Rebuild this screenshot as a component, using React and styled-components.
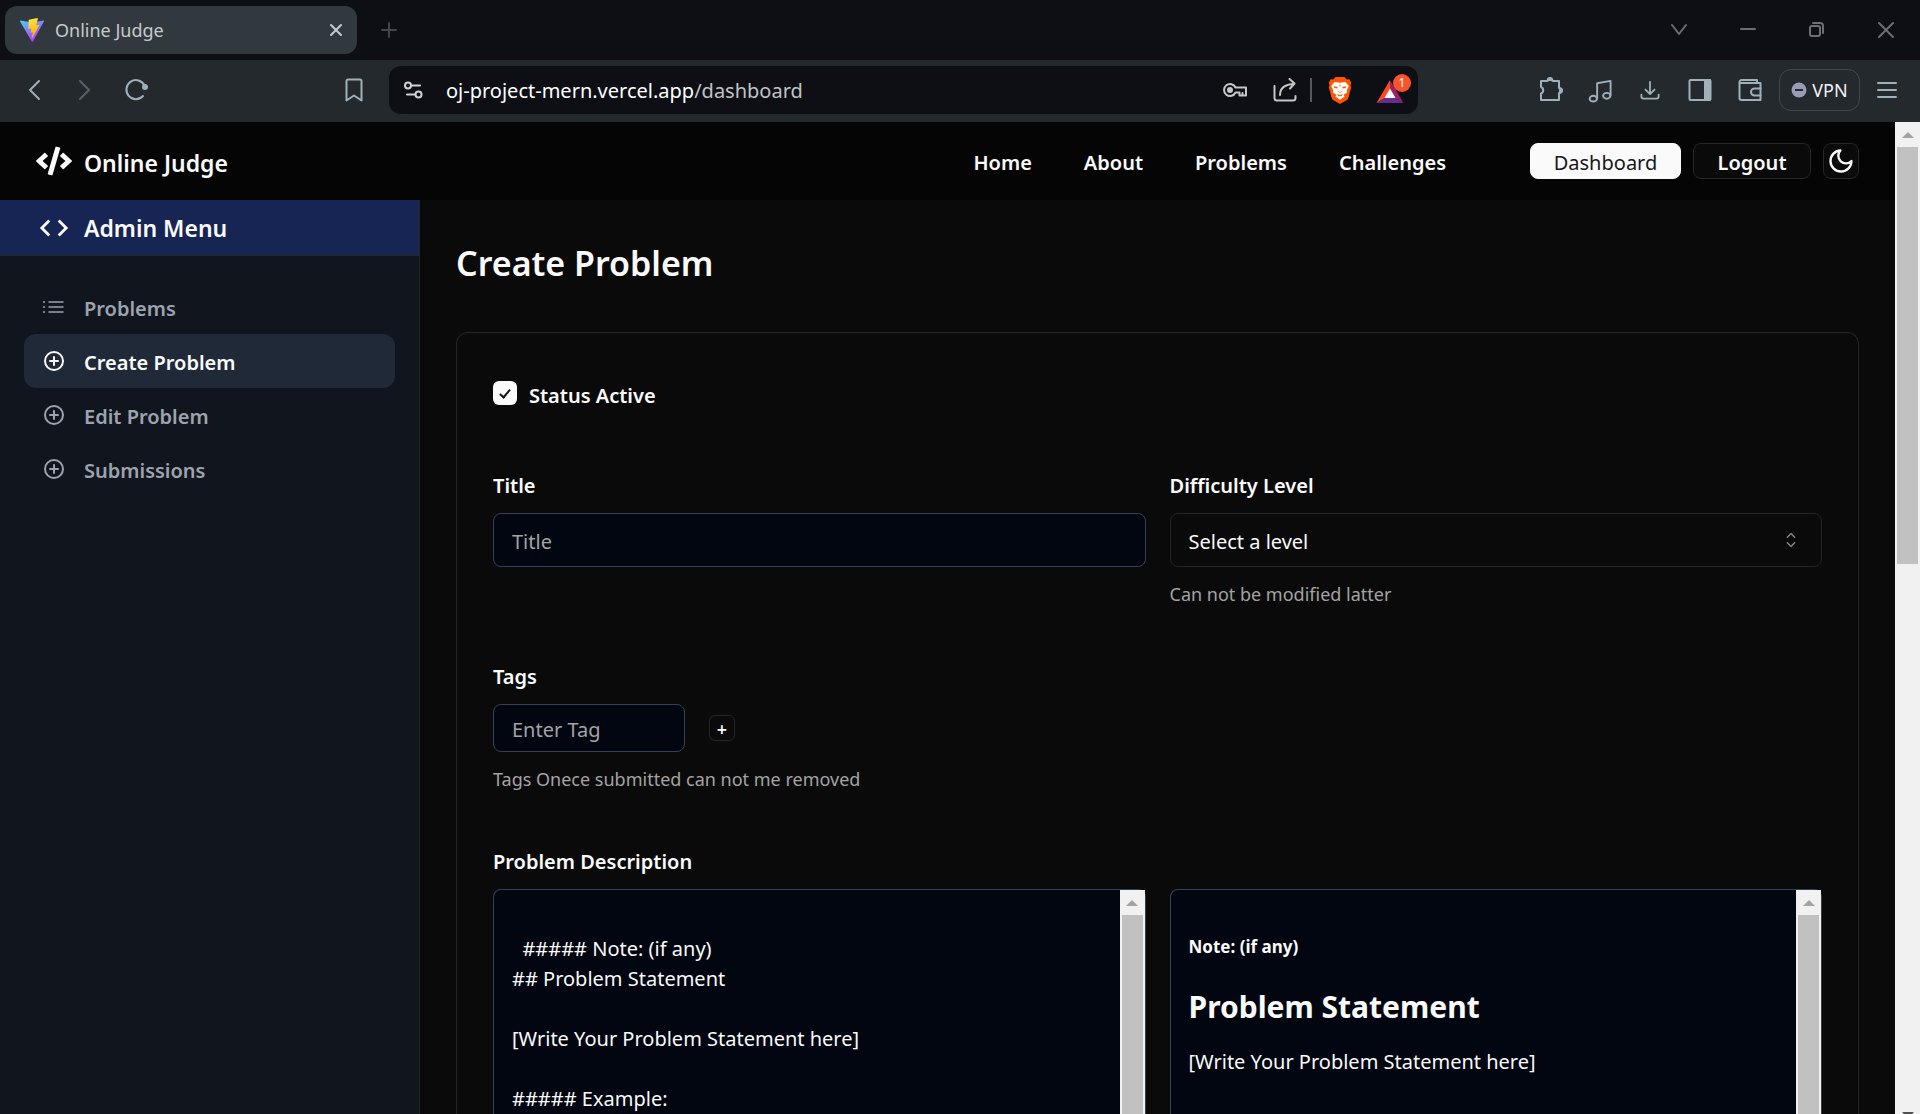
import React from "react";
import styled, { createGlobalStyle } from "styled-components";
import { FaCode } from "react-icons/fa";
import { MdCode } from "react-icons/md";
import { RxCaretSort } from "react-icons/rx";

const GlobalStyle = createGlobalStyle`
  *, *::before, *::after { box-sizing: border-box; }
  html, body, #root { height: 100%; }
  body {
    margin: 0;
    overflow: hidden;
    background: #0a0a0a;
    color: #fafafa;
    font-family: "Noto Sans", "Open Sans", sans-serif;
    font-size: 20px;
  }
  button, input, select, textarea { font: inherit; color: inherit; }
  button { padding: 0; border: 0; background: none; cursor: pointer; }
  h1, h2, h5, p, ul { margin: 0; padding: 0; }
  a { color: inherit; text-decoration: none; }
`;

/* ---------- browser window ---------- */

const Window = styled.div`
  display: flex;
  flex-direction: column;
  height: 100vh;
`;

const TabStrip = styled.div`
  display: flex;
  align-items: center;
  flex: none;
  height: 60px;
  padding-left: 5px;
  background: #0d0f14;
  color: #6b6e72;
`;

const Tab = styled.div`
  display: flex;
  align-items: center;
  gap: 11px;
  width: 352px;
  height: 48px;
  padding: 0 13px 0 15px;
  border-radius: 12px;
  background: #32393e;
  color: #c6cacc;
  font-size: 18px;
`;

const TabTitle = styled.span`
  flex: 1;
`;

const IconButton = styled.button`
  display: grid;
  place-items: center;
  flex: none;
  width: ${(p) => p.$w || 24}px;
  height: ${(p) => p.$h || 24}px;
  color: ${(p) => p.$color || "inherit"};
`;

const NewTab = styled(IconButton)`
  margin-left: 14px;
  color: #43474c;
`;

const WindowControls = styled.div`
  display: flex;
  margin-left: auto;
`;

const Toolbar = styled.div`
  display: flex;
  align-items: center;
  flex: none;
  height: 62px;
  padding: 0 6px 2px 11px;
  background: #23292d;
  color: #9fb0ba;
`;

const ToolGroup = styled.div`
  display: flex;
  align-items: center;
  margin-left: ${(p) => (p.$push ? "auto" : "0")};
`;

const BookmarkSlot = styled.div`
  display: flex;
  justify-content: flex-end;
  width: 228px;
  padding-right: 12px;
`;

const AddressBar = styled.div`
  display: flex;
  align-items: center;
  flex: 0 1 1029px;
  height: 48px;
  padding-left: 13px;
  border-radius: 12px;
  background: #0d0f14;
  color: #d0d2d4;
`;

const Url = styled.div`
  flex: 1;
  padding-left: 22px;
  outline: none;
  color: #fff;
  span { color: #c0c3c6; }
`;

const Divider = styled.span`
  width: 2px;
  height: 24px;
  background: #55595e;
`;

const VpnButton = styled.button`
  display: flex;
  align-items: center;
  justify-content: center;
  gap: 5px;
  width: 81px;
  height: 42px;
  margin-left: 4px;
  border: 1px solid #3c4a50;
  border-radius: 12px;
  color: #f0f2f4;
  font-size: 18px;
`;

/* ---------- scroll bars ---------- */

const ScrollTrack = styled.div`
  display: flex;
  flex-direction: column;
  flex: none;
  width: 25px;
  background: #f1f1f1;
`;

const ScrollArrow = styled.span`
  display: grid;
  place-items: center;
  flex: none;
  height: 25px;
  margin-bottom: ${(p) => (p.$down ? "-13px" : "0")};
  margin-top: ${(p) => (p.$down ? "auto" : "0")};
  &::before {
    content: "";
    border: 6px solid transparent;
    border-top: ${(p) => (p.$down ? "6px solid #505050" : "0")};
    border-bottom: ${(p) => (p.$down ? "0" : "6px solid #a3a3a3")};
  }
`;

const ScrollThumb = styled.span`
  flex: ${(p) => p.$grow};
  margin: 0 2px;
  background: #c1c1c1;
`;

/* ---------- site ---------- */

const Viewport = styled.div`
  display: flex;
  flex: 1;
  min-height: 0;
`;

const Site = styled.div`
  display: flex;
  flex-direction: column;
  flex: 1;
  min-width: 0;
`;

const Caption = styled.span`
  padding-top: 3px;
`;

const Header = styled.header`
  display: flex;
  align-items: center;
  flex: none;
  height: 78px;
  padding: 0 36px;
  background: #050505;
  font-weight: 600;
`;

const Brand = styled.a`
  display: flex;
  align-items: center;
  gap: 12px;
  font-size: 23px;
`;

const Nav = styled.nav`
  display: flex;
  gap: 52px;
  margin-left: auto;
  padding-top: 3px;
`;

const HeaderActions = styled.div`
  display: flex;
  align-items: center;
  gap: 12px;
  margin-left: 84px;
`;

const HeaderButton = styled.button`
  display: grid;
  place-items: center;
  width: ${(p) => p.$w}px;
  height: 36px;
  border: 1px solid ${(p) => (p.$filled ? "#fafafa" : "#262626")};
  border-radius: 8px;
  background: ${(p) => (p.$filled ? "#fafafa" : "#0a0a0a")};
  color: ${(p) => (p.$filled ? "#171717" : "#fafafa")};
  font-weight: ${(p) => (p.$filled ? 400 : 600)};
`;

const Body = styled.div`
  display: flex;
  flex: 1;
  min-height: 0;
`;

const Sidebar = styled.aside`
  flex: none;
  width: 420px;
  border-right: 1px solid #262626;
  background: #11151d;
`;

const SidebarTitle = styled.div`
  display: flex;
  align-items: center;
  gap: 13px;
  height: 56px;
  padding-left: 37px;
  border-bottom: 1px solid #262626;
  background: #172554;
  font-size: 23px;
  font-weight: 600;
`;

const Menu = styled.ul`
  padding: 24px;
  list-style: none;
`;

const MenuLink = styled.a`
  display: flex;
  align-items: center;
  gap: 18px;
  height: 54px;
  padding-left: 18px;
  border-radius: 12px;
  background: ${(p) => (p.$active ? "#1f2937" : "transparent")};
  color: ${(p) => (p.$active ? "#fafafa" : "#9ca3af")};
  font-weight: 600;
`;

const Main = styled.main`
  display: flex;
  flex-direction: column;
  flex: 1;
  min-width: 0;
  padding: 36px 36px 0;
`;

const PageTitle = styled.h1`
  margin-bottom: 42px;
  font-size: 34px;
  font-weight: 600;
  line-height: 54px;
`;

const Card = styled.form`
  display: flex;
  flex-direction: column;
  flex: 1;
  gap: 53px;
  min-height: 0;
  padding: 36px;
  border: 1px solid #262626;
  border-bottom: 0;
  border-radius: 12px 12px 0 0;
`;

const StatusRow = styled.div`
  display: flex;
  align-items: flex-start;
  gap: 12px;
  height: 49px;
  padding-top: 12px;
`;

const Checkbox = styled.input`
  appearance: none;
  width: 24px;
  height: 24px;
  margin: 0;
  border-radius: 6px;
  background: #fafafa;
  display: grid;
  place-items: center;
  &:checked::before {
    content: "";
    width: 6px;
    height: 11px;
    margin-bottom: 2px;
    border: solid #171717;
    border-width: 0 2px 2px 0;
    transform: rotate(40deg);
  }
`;

const Label = styled.label`
  font-weight: 600;
  line-height: 30px;
`;

const Columns = styled.div`
  display: grid;
  grid-template-columns: 1fr 1fr;
  gap: 24px;
`;

const Field = styled.div`
  display: flex;
  flex-direction: column;
  gap: 12px;
`;

const TextInput = styled.input`
  width: ${(p) => (p.$w ? p.$w + "px" : "100%")};
  height: ${(p) => p.$h}px;
  padding: 2px 18px 0;
  border: 1px solid #334155;
  border-radius: 8px;
  background: #020611;
  outline: none;
  &::placeholder { color: #a3a3a3; opacity: 1; }
`;

const SelectBox = styled.div`
  display: grid;
  align-items: center;
  > * { grid-area: 1 / 1; }
  svg {
    justify-self: end;
    margin-right: 19px;
    color: #8a8a8a;
    pointer-events: none;
  }
`;

const Select = styled.select`
  appearance: none;
  width: 100%;
  height: 54px;
  padding: 2px 18px 0;
  border: 1px solid #262626;
  border-radius: 8px;
  background: #0a0a0a;
  outline: none;
`;

const Hint = styled.p`
  color: #a3a3a3;
  font-size: 18px;
  line-height: 30px;
`;

const TagRow = styled.div`
  display: flex;
  align-items: center;
  gap: 24px;
`;

const AddTag = styled.button`
  display: grid;
  place-items: center;
  width: 26px;
  height: 26px;
  border: 1px solid #262626;
  border-radius: 6px;
  font-size: 18px;
  font-weight: 600;
  line-height: 21px;
`;

const DescriptionField = styled(Field)`
  flex: 1;
  min-height: 0;
`;

const Editors = styled(Columns)`
  flex: 1;
  min-height: 0;
  margin-bottom: -36px;
`;

const Pane = styled.div`
  display: flex;
  min-height: 0;
  border: 1px solid #334155;
  border-bottom: 0;
  border-radius: 8px 8px 0 0;
  background: #020611;
`;

const Editor = styled.textarea`
  flex: 1;
  min-width: 0;
  padding: 14px 18px;
  border: 0;
  border-radius: 8px 0 0 0;
  background: transparent;
  outline: none;
  resize: none;
  overflow: hidden;
  line-height: 30px;
`;

const Preview = styled.div`
  flex: 1;
  min-width: 0;
  padding: 45px 18px 0;
  overflow: hidden;
  h5 { font-size: 17px; font-weight: 700; line-height: 24px; }
  h2 { margin: 28px 0 20px; font-size: 30px; font-weight: 700; line-height: 40px; }
  p { line-height: 30px; }
`;

/* ---------- drawings ---------- */

const Svg = ({ size = 24, w = size, h = size, box, sw = 2, children }) => (
  <svg
    width={w}
    height={h}
    viewBox={box || `0 0 ${w} ${h}`}
    fill="none"
    stroke="currentColor"
    strokeWidth={sw}
    strokeLinecap="round"
    strokeLinejoin="round"
    aria-hidden="true"
  >
    {children}
  </svg>
);

const ViteLogo = () => (
  <svg width="24" height="24" viewBox="0 0 24 24" aria-hidden="true">
    <defs>
      <linearGradient id="shield" x1="0" y1="0" x2="0.6" y2="1">
        <stop offset="0" stopColor="#41d1ff" />
        <stop offset="1" stopColor="#bd34fe" />
      </linearGradient>
      <linearGradient id="bolt" x1="0.4" y1="0" x2="0.6" y2="1">
        <stop offset="0" stopColor="#ffea83" />
        <stop offset="0.1" stopColor="#ffdd35" />
        <stop offset="1" stopColor="#ffa800" />
      </linearGradient>
    </defs>
    <path d="M23.9 3.4 12.9 23.4c-.3.4-.9.4-1.1 0L.1 3.4c-.3-.5.1-1 .6-.9L12.1 4.500l11.200-2c.5-.1.9.4.6.9z" fill="url(#shield)" />
    <path d="M17.300.1 9 1.700c-.2 0-.3.1-.3.3l-.5 8.700c0 .2.2.4.4.3l2.300-.5c.2 0 .4.200.4.4l-.7 3.400c0 .2.200.4.4.4l1.400-.5c.2 0 .4.200.4.400l-1.100 5.300c-.1.4.4.500.6.2L19.500 7.100c.1-.2-.1-.5-.3-.4l-2.500.5c-.2 0-.4-.2-.4-.4l1.500-5.500c.1-.8-.2-1.200-.5-1.200z" fill="url(#bolt)" />
  </svg>
);

const BraveLion = () => (
  <svg width="24" height="28" viewBox="0 0 24 28" aria-hidden="true">
    <path d="M7.500 1h9l2.300 2.600 2.500-.3 2 3.500-.8 2.200.7 2.200-2.700 10.300c-.4 1.200-1 2-2 2.700L12.900 27.500c-.6.4-1.200.4-1.800 0L5.500 24.200c-1-.7-1.600-1.500-2-2.700L.8 11.200 1.500 9 .7 6.800l2-3.500 2.500.3z" fill="#ff5500" />
    <path d="M6.500 6 12 6.800 17.500 6l3.200 4-1.900 4.200.4 2.300-3.600 2.300 1 1.600L12 23.800l-4.600-3.400 1-1.600-3.600-2.300.4-2.300L3.300 10z" fill="#fff" />
    <path d="M5.500 10.200 9.800 11l-.4 1.400-3-.5zM18.500 10.200 14.200 11l.4 1.400 3-.5zM10.300 12.500l-.6 3 2.300 1.200 2.300-1.200-.6-3 .3 2.700L12 16l-2-.8zM9 17.800l3 1.500 3-1.500-1.700 2.600L12 19.900l-1.300.5zM11.300 8.800h1.400L12 11.500z" fill="#ff5500" />
  </svg>
);

const BatLogo = () => (
  <svg width="36" height="32" viewBox="0 0 36 32" aria-hidden="true">
    <path d="M15 6 1.500 29 15 21z" fill="#ff4724" />
    <path d="M15 6 28.500 29 15 21z" fill="#9e1f63" />
    <path d="M1.500 29h27L20 23.500H10z" fill="#662d91" />
    <path d="m15 14.500 5.500 9.500h-11z" fill="#fff" />
    <circle cx="27" cy="9" r="9" fill="#fb542b" />
    <text x="27" y="13" textAnchor="middle" fontSize="12" fill="#fff">1</text>
  </svg>
);

const MoonIcon = () => (
  <Svg size={28} box="0 0 24 24" sw={2}>
    <path d="M11.500 3a6.500 6.500 0 0 0 9.500 9 9 9 0 1 1-9.500-9z" />
  </Svg>
);

const PlusCircle = () => (
  <Svg size={24}>
    <circle cx="12" cy="12" r="9" />
    <path d="M12 8v8M8 12h8" />
  </Svg>
);

const ListIcon = () => (
  <Svg size={24}>
    <path d="M7 7h14M7 12h14M7 17h14" strokeWidth="1.5" />
    <path d="M2 7h.01M2 12h.01M2 17h.01" />
  </Svg>
);

const NAV = ["Home", "About", "Problems", "Challenges"];
const MENU = [
  { label: "Problems", icon: <ListIcon /> },
  { label: "Create Problem", icon: <PlusCircle />, active: true },
  { label: "Edit Problem", icon: <PlusCircle /> },
  { label: "Submissions", icon: <PlusCircle /> },
];

const TEMPLATE = `
  ##### Note: (if any)
## Problem Statement

[Write Your Problem Statement here]

##### Example:
`;

function BrowserChrome() {
  return (
    <>
      <TabStrip>
        <Tab>
          <ViteLogo />
          <TabTitle>Online Judge</TabTitle>
          <IconButton $w={16} aria-label="Close tab">
            <Svg size={16}><path d="M3 3l10 10M13 3 3 13" /></Svg>
          </IconButton>
        </Tab>
        <NewTab $w={36} aria-label="New tab">
          <Svg size={18}><path d="M9 2v14M2 9h14" /></Svg>
        </NewTab>
        <WindowControls>
          <IconButton $w={69} $h={60} aria-label="Search tabs">
            <Svg size={18}><path d="m2 4 7 9 7-9" /></Svg>
          </IconButton>
          <IconButton $w={69} $h={60} aria-label="Minimize">
            <Svg size={18}><path d="M2 8h14" /></Svg>
          </IconButton>
          <IconButton $w={69} $h={60} aria-label="Restore">
            <Svg size={18}>
              <rect x="2" y="5" width="10" height="10" rx="2" />
              <path d="M5 2h7a3 3 0 0 1 3 3v7" />
            </Svg>
          </IconButton>
          <IconButton $w={69} $h={60} aria-label="Close">
            <Svg size={18}><path d="m2 2 14 14M16 2 2 16" /></Svg>
          </IconButton>
        </WindowControls>
      </TabStrip>

      <Toolbar>
        <ToolGroup>
          <IconButton $w={46} $h={46} aria-label="Back">
            <Svg w={14} h={24}><path d="M12 3 3 12l9 9" /></Svg>
          </IconButton>
          <IconButton $w={54} $h={46} $color="#56626a" aria-label="Forward">
            <Svg w={14} h={24}><path d="m3 3 9 9-9 9" /></Svg>
          </IconButton>
          <IconButton $w={50} $h={46} aria-label="Reload">
            <Svg size={24}>
              <path d="M20.500 7.500A9.500 9.500 0 1 0 19 18" />
              <circle cx="21" cy="9" r="2" fill="currentColor" />
            </Svg>
          </IconButton>
        </ToolGroup>
        <BookmarkSlot>
          <IconButton $w={46} $h={46} aria-label="Bookmark">
            <Svg w={18} h={24}><path d="M3 1.500h12a1.500 1.500 0 0 1 1.500 1.500v19.500L9 17.500l-7.500 5V3A1.500 1.500 0 0 1 3 1.500z" /></Svg>
          </IconButton>
        </BookmarkSlot>
        <AddressBar>
          <IconButton $w={22} aria-label="Site information">
            <Svg size={20}>
              <circle cx="5" cy="5.500" r="3" />
              <path d="M9 5.500h8M4 14.500h8" />
              <circle cx="15.500" cy="14.500" r="3" />
            </Svg>
          </IconButton>
          <Url role="textbox" aria-label="Address" contentEditable suppressContentEditableWarning spellCheck={false}>
            oj-project-mern.vercel.app<span>/dashboard</span>
          </Url>
          <ToolGroup>
            <IconButton $w={50} $h={40} $color="#c6c6c6" aria-label="Passwords">
              <Svg w={26} h={16}>
                <path d="M13.500 5.500A6 6 0 1 0 13.500 10.500h4V13.500h6.500V5.500z" />
                <circle cx="8" cy="8" r="2" fill="currentColor" />
                <path d="M20.500 11v2" />
              </Svg>
            </IconButton>
            <IconButton $w={50} $h={40} $color="#c6c6c6" aria-label="Share">
              <Svg size={24}>
                <path d="M1.500 8v12a2.500 2.500 0 0 0 2.500 2.500h16a2.500 2.500 0 0 0 2.500-2.500v-2" />
                <path d="M7 17c0-6 3-10.500 14-11M16.500 1l5 4.500-4.500 5" />
              </Svg>
            </IconButton>
            <Divider />
            <IconButton $w={56} $h={40} aria-label="Shields"><BraveLion /></IconButton>
            <IconButton $w={50} $h={40} aria-label="Rewards"><BatLogo /></IconButton>
          </ToolGroup>
        </AddressBar>
        <ToolGroup $push>
          <IconButton $w={48} $h={46} aria-label="Extensions">
            <Svg size={26}>
              <path d="M3 4h6.500a2.500 2.500 0 0 1 5 0H21v7a2.500 2.500 0 0 1 0 5v7H3v-6.500a3.500 3.500 0 0 0 0-6.500z" />
              <path d="M10 3a2 2 0 0 1 4 0zM22 11.500a2 2 0 0 1 0 4z" fill="currentColor" />
            </Svg>
          </IconButton>
          <IconButton $w={50} $h={46} aria-label="Media">
            <Svg size={25} box="0 0 26 26">
              <path d="M9.500 21V5.500L23.500 3v15" />
              <ellipse cx="5.500" cy="21.500" rx="3.800" ry="3" />
              <ellipse cx="19.500" cy="18.500" rx="3.800" ry="3" />
            </Svg>
          </IconButton>
          <IconButton $w={50} $h={46} aria-label="Downloads">
            <Svg size={20} box="0 0 22 22">
              <path d="M11 2v13M6 10.500l5 5 5-5M1.500 16v2a2.500 2.500 0 0 0 2.500 2.500h14a2.500 2.500 0 0 0 2.500-2.500v-2" />
            </Svg>
          </IconButton>
          <IconButton $w={50} $h={46} aria-label="Side panel">
            <Svg size={24}>
              <rect x="1.500" y="2" width="21" height="20" rx="1" />
              <path d="M17 2h5v20h-5z" fill="currentColor" />
            </Svg>
          </IconButton>
          <IconButton $w={50} $h={46} aria-label="Wallet">
            <Svg size={24}>
              <path d="M1.500 4a2 2 0 0 1 2-2H19v3M1.500 4v16a2 2 0 0 0 2 2h19V5H3A1.500 1.500 0 0 1 1.500 4" />
              <path d="M22.500 10.500h-6a3.500 3.500 0 0 0 0 7h6" />
            </Svg>
          </IconButton>
          <VpnButton>
            <svg width="16" height="16" aria-hidden="true">
              <circle cx="8" cy="8" r="7.500" fill="#9a9bb4" />
              <rect x="4" y="7" width="8" height="2" fill="#23292d" />
            </svg>
            VPN
          </VpnButton>
          <IconButton $w={54} $h={46} aria-label="Browser menu">
            <Svg size={22}><path d="M2 4h18M2 11h18M2 18h18" /></Svg>
          </IconButton>
        </ToolGroup>
      </Toolbar>
    </>
  );
}

export default function App() {
  return (
    <Window>
      <GlobalStyle />
      <BrowserChrome />
      <Viewport>
        <Site>
          <Header>
            <Brand href="#">
              <FaCode size={36} />
              <Caption>Online Judge</Caption>
            </Brand>
            <Nav>
              {NAV.map((item) => (
                <a key={item} href="#">{item}</a>
              ))}
            </Nav>
            <HeaderActions>
              <HeaderButton $w={151} $filled><Caption>Dashboard</Caption></HeaderButton>
              <HeaderButton $w={118}><Caption>Logout</Caption></HeaderButton>
              <HeaderButton $w={36} aria-label="Dark theme">
                <MoonIcon />
              </HeaderButton>
            </HeaderActions>
          </Header>
          <Body>
            <Sidebar>
              <SidebarTitle>
                <MdCode size={34} />
                Admin Menu
              </SidebarTitle>
              <Menu>
                {MENU.map(({ label, icon, active }) => (
                  <li key={label}>
                    <MenuLink href="#" $active={active}>
                      {icon}
                      <Caption>{label}</Caption>
                    </MenuLink>
                  </li>
                ))}
              </Menu>
            </Sidebar>
            <Main>
              <PageTitle>Create Problem</PageTitle>
              <Card>
                <StatusRow>
                  <Checkbox id="status" type="checkbox" defaultChecked />
                  <Label htmlFor="status">Status Active</Label>
                </StatusRow>
                <Columns>
                  <Field>
                    <Label htmlFor="title">Title</Label>
                    <TextInput id="title" placeholder="Title" $h={54} />
                  </Field>
                  <Field>
                    <Label htmlFor="level">Difficulty Level</Label>
                    <SelectBox>
                      <Select id="level" defaultValue="">
                        <option value="">Select a level</option>
                      </Select>
                      <RxCaretSort size={24} />
                    </SelectBox>
                    <Hint>Can not be modified latter</Hint>
                  </Field>
                </Columns>
                <Field>
                  <Label htmlFor="tag">Tags</Label>
                  <TagRow>
                    <TextInput id="tag" placeholder="Enter Tag" $w={192} $h={48} />
                    <AddTag type="button"><Caption>+</Caption></AddTag>
                  </TagRow>
                  <Hint>Tags Onece submitted can not me removed</Hint>
                </Field>
                <DescriptionField>
                  <Label htmlFor="description">Problem Description</Label>
                  <Editors>
                    <Pane>
                      <Editor id="description" defaultValue={TEMPLATE} spellCheck={false} />
                      <ScrollTrack>
                        <ScrollArrow />
                        <ScrollThumb $grow="1" />
                      </ScrollTrack>
                    </Pane>
                    <Pane>
                      <Preview>
                        <h5>Note: (if any)</h5>
                        <h2>Problem Statement</h2>
                        <p>[Write Your Problem Statement here]</p>
                      </Preview>
                      <ScrollTrack>
                        <ScrollArrow />
                        <ScrollThumb $grow="1" />
                      </ScrollTrack>
                    </Pane>
                  </Editors>
                </DescriptionField>
              </Card>
            </Main>
          </Body>
        </Site>
        <ScrollTrack>
          <ScrollArrow />
          <ScrollThumb $grow="0 0 42%" />
          <ScrollArrow $down />
        </ScrollTrack>
      </Viewport>
    </Window>
  );
}
